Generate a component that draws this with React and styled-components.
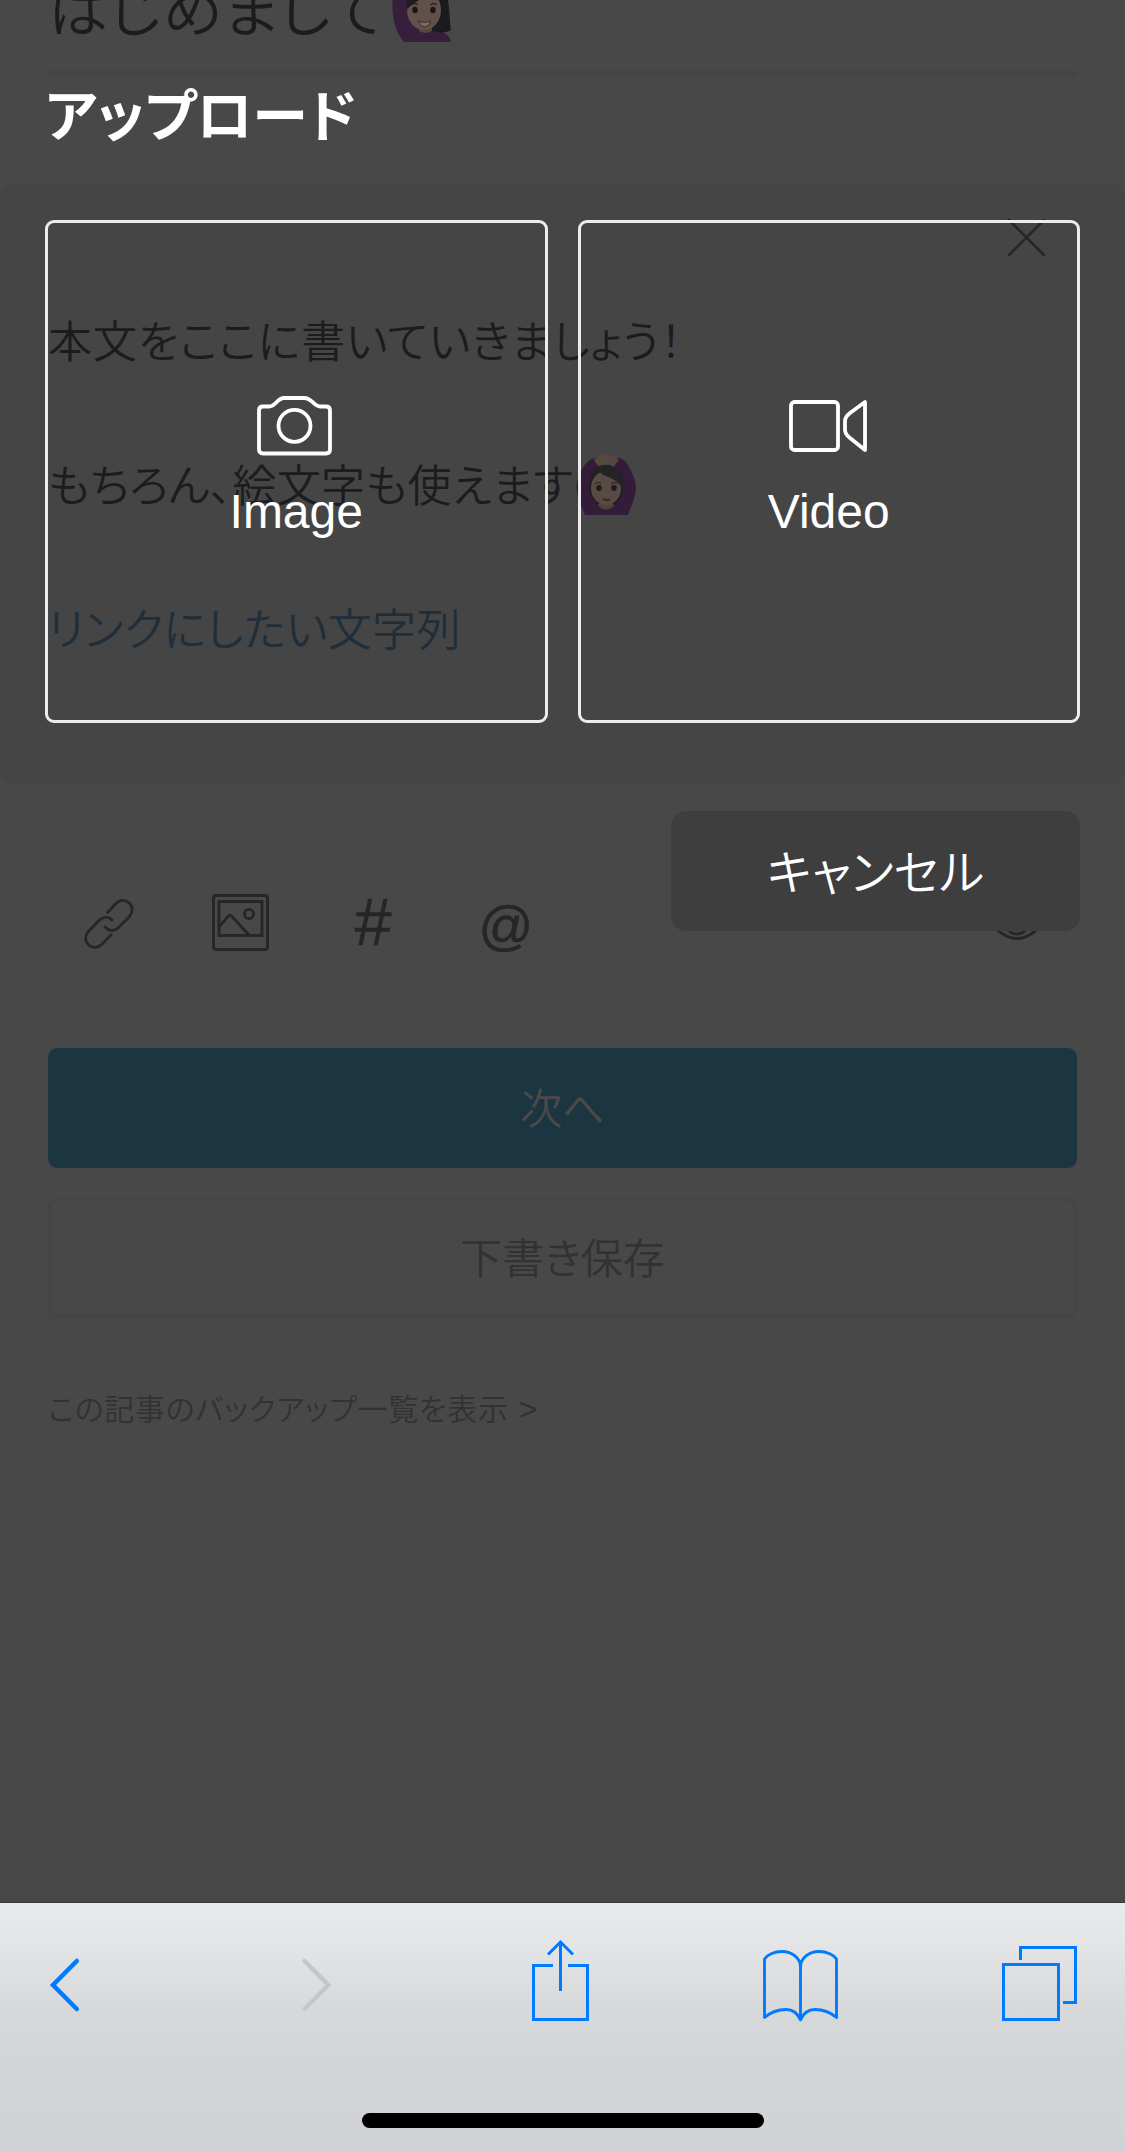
import React from "react";
import styled, { createGlobalStyle } from "styled-components";

const Global = createGlobalStyle`
  *, *::before, *::after { box-sizing: border-box; }
  body {
    margin: 0;
    background: #484848;
    font-family: "Liberation Sans", "Noto Sans CJK JP", sans-serif;
  }
  p, h1, h2 { margin: 0; font-weight: 400; }
  button { font-family: inherit; border: 0; padding: 0; margin: 0; background: none; }
  svg { display: block; flex: none; overflow: visible; }
`;

const Screen = styled.div`
  width: 1125px;
  height: 2152px;
  display: flex;
  flex-direction: column;
  position: relative;
  overflow: hidden;
  background: #484848;
`;

const Page = styled.main`
  flex: 1;
  display: flex;
  flex-direction: column;
`;

const Line = styled.p`
  display: flex;
  align-items: center;
  white-space: nowrap;
  font-family: "Noto Sans CJK JP", sans-serif;
  font-feature-settings: "palt";
  font-weight: 350;
  padding-bottom: 5px;
  font-size: ${(p) => p.$size}px;
  letter-spacing: ${(p) => p.$track || 0}px;
  color: ${(p) => p.$color || "#1c1c1c"};
`;

const TitleRow = styled.header`
  height: 76px;
  margin: 0 48px;
  border-bottom: 6px solid #454545;
  display: flex;
  align-items: flex-end;
  gap: 6px;
  padding: 0 0 28px 0;
`;

const TitleText = styled(Line)`
  height: 68px;
`;

const EditorPanel = styled.section`
  margin-top: 108px;
  height: 600px;
  border-radius: 14px;
  background: #454545;
  padding: 35px 48px 0;
  display: flex;
  flex-direction: column;
`;

const CloseRow = styled.div`
  display: flex;
  justify-content: flex-end;
  height: 49px;
  padding-right: 32px;
`;

const BodyLine = styled(Line)`
  height: 144px;
  padding-bottom: 3px;
  gap: 3px;

  svg { margin-top: 4px; }
`;

const ToolRow = styled.div`
  height: 264px;
  display: flex;
  align-items: center;
  padding: 14px 83px 0 84px;
`;

const Tool = styled.span`
  width: ${(p) => p.$w}px;
  height: 60px;
  margin-right: ${(p) => p.$gap || 0}px;
  padding-bottom: ${(p) => p.$lift || 0}px;
  padding-top: ${(p) => p.$drop || 0}px;
  display: flex;
  align-items: center;
  justify-content: center;
  color: #262626;
  font-size: ${(p) => p.$size || 48}px;
  line-height: 60px;
  -webkit-text-stroke: 0.6px #262626;
`;

const Spacer = styled.span`
  flex: 1;
`;

const Actions = styled.div`
  padding: 0 48px;
  display: flex;
  flex-direction: column;
  gap: 30px;
`;

const ActionButton = styled.button`
  height: 120px;
  border-radius: 9px;
  display: flex;
  align-items: center;
  justify-content: center;
  background: ${(p) => (p.$primary ? "#1b3641" : "transparent")};
  border: ${(p) => (p.$primary ? "0" : "3px solid #454545")};
`;

const Backup = styled(Line)`
  margin: 67px 0 0 48px;
  height: 48px;
`;

const Chevron = styled.span`
  font-family: "Liberation Sans", sans-serif;
  font-size: 32px;
  margin: 5px 0 0 10px;
`;

const BrowserBar = styled.nav`
  height: 250px;
  border-top: 1px solid #39393a;
  background: linear-gradient(#e9eaeb 0, #e4e5e6 38px, #d6d8da 110px, #d3d4d8 160px, #d1d2d6 100%);
  display: flex;
  flex-direction: column;
  align-items: center;
  justify-content: space-between;
  padding: 36px 0 24px;
`;

const BrowserIcons = styled.div`
  width: 100%;
  padding-left: 50px;
  display: flex;
`;

const BrowserButton = styled.span`
  margin-right: ${(p) => p.$gap || 0}px;
`;

const HomeIndicator = styled.div`
  width: 402px;
  height: 15px;
  border-radius: 8px;
  background: #000;
`;

const Sheet = styled.div`
  position: absolute;
  inset: 0 0 250px 0;
  padding: 76px 45px 0;
  display: flex;
  flex-direction: column;
`;

const SheetTitle = styled.h2`
  height: 144px;
  line-height: 72px;
  color: #fff;
  font-family: "Noto Sans CJK JP", sans-serif;
  font-feature-settings: "palt";
  font-weight: 700;
  font-size: 56px;
`;

const Choices = styled.div`
  display: grid;
  grid-template-columns: 1fr 1fr;
  gap: 30px;
`;

const Choice = styled.button`
  height: 503px;
  border: 3px solid #ececec;
  border-radius: 9px;
  display: flex;
  flex-direction: column;
  align-items: center;
  color: #fff;
  padding-top: 173px;
  font-size: 48px;
  line-height: 56px;
`;

const ChoiceIcon = styled.span`
  height: 88px;
  display: flex;
`;

const Cancel = styled.button`
  align-self: flex-end;
  margin-top: 88px;
  width: 409px;
  height: 120px;
  border-radius: 15px;
  background: #3e3e3e;
  display: flex;
  align-items: center;
  justify-content: center;
`;

const RaisingHand = () => (
  <svg width="60" height="60" viewBox="0 0 60 60">
    <defs><clipPath id="handClip"><rect width="60" height="60" /></clipPath></defs>
    <g clipPath="url(#handClip)">
      <path d="M3 0C-2 24 0 46 12 60H59C58 52 50 49 42 49L20 42C16 32 17 14 17 0Z" fill="#361f3d" />
      <path d="M17 8C24 -10 52 -8 56 18C58 32 58 43 59 48C53 52 45 50 41 49L22 43C17 32 14 20 17 8Z" fill="#1b1b1d" />
      <path d="M27 40h13v9q-6 4-13 0z" fill="#584538" />
      <ellipse cx="32" cy="28" rx="17" ry="20" fill="#62514a" />
      <path d="M15 27C22 20 36 15 36 6C42 13 50 15 52 28C55 6 46-2 33-2C21-2 13 8 15 27Z" fill="#1c1c1e" />
      <ellipse cx="23" cy="28" rx="2.7" ry="3.2" fill="#1a1513" />
      <ellipse cx="41" cy="28" rx="2.7" ry="3.2" fill="#1a1513" />
      <path d="M19 23q4-3 7 0M38 23q4-3 7 0" stroke="#2b221e" strokeWidth="1.4" fill="none" />
      <path d="M26 39q7 3 13 0q-2 6-6 6t-7-6z" fill="#75706b" stroke="#4a2925" strokeWidth="1" />
    </g>
  </svg>
);

const OkGesture = () => (
  <svg width="61" height="60" viewBox="0 0 61 60">
    <path d="M9 60C3 45-2 35 2 24C6 12 12 3 20 3L23 12L38 12L42 3C50 3 55 14 59 26C62 37 57 46 52 60Z" fill="#321c3a" />
    <path d="M18 5C24-2 36-2 43 5L38 11L33 4H28L22 11Z" fill="#59473c" />
    <path d="M22 11L28 4H34L39 11Z" fill="#4b4b4b" />
    <path d="M13 31C13 16 20 10 30 10C41 10 47 18 47 31C47 42 42 48 36 51H24C18 48 13 42 13 31Z" fill="#202022" />
    <path d="M24 46h12l2 5q-8 7-16 0z" fill="#51423a" />
    <ellipse cx="30" cy="33" rx="15" ry="17" fill="#584b45" />
    <path d="M14 32C15 21 20 18 22 15C28 24 41 21 46 34C48 19 40 10 30 10C20 10 13 18 14 32Z" fill="#242426" />
    <ellipse cx="23" cy="33" rx="2.8" ry="3" fill="#211b18" />
    <ellipse cx="38" cy="33" rx="2.8" ry="3" fill="#211b18" />
    <path d="M19 29q4-3 6 0M35 29q4-3 6 0" stroke="#2b221e" strokeWidth="1.2" fill="none" />
    <path d="M27 44q4 2 7 0" stroke="#432521" strokeWidth="2" fill="none" />
  </svg>
);

const CloseIcon = () => (
  <svg width="37" height="38" fill="none" stroke="#262626" strokeWidth="2.6" strokeLinecap="round">
    <path d="M1 1L36 36M36 1L1 36" />
  </svg>
);

const LinkIcon = () => (
  <svg width="50" height="50" viewBox="0 0 50 50" fill="none" stroke="currentColor" strokeWidth="2.8" strokeLinecap="round">
    <path d="M23.500 13.500L32 4.500C36 0.300 41.500 0.600 45 3.800C49 7.500 49.300 13 45.500 17.500L34 29C29.500 33 24.500 32 21 28" />
    <path d="M28 21C24.500 17.500 19.500 17.500 15.500 21L4.500 32.500C0.700 37 0.700 42 4.500 45.700C8 49.300 13.500 49.300 17.500 45.500L27 36" />
  </svg>
);

const PhotoIcon = () => (
  <svg width="57" height="57" fill="none" stroke="currentColor" strokeWidth="2.9">
    <rect x="1.500" y="1.500" width="54" height="54" rx="2.500" />
    <rect x="7" y="7.500" width="43" height="34" />
    <path d="M7 33L16 22.500Q18 20 20 22.500L37 41" />
    <circle cx="37" cy="20" r="4.600" />
  </svg>
);

const EyeIcon = () => (
  <svg width="58" height="36" fill="none" stroke="currentColor" strokeWidth="2.8">
    <path d="M2 18Q29-15 56 18Q29 51 2 18Z" />
    <circle cx="29" cy="18" r="12" />
  </svg>
);

const CameraIcon = () => (
  <svg width="76" height="60" viewBox="0 0 76 60" fill="none" stroke="currentColor" strokeWidth="3.8" strokeLinejoin="round">
    <path d="M5 10.500H11C18 10.500 19 2 26 2H46C54 2 56 10.500 62 10.500H68Q72 10.500 72 14.500V53.500Q72 57.500 68 57.500H5Q1 57.500 1 53.500V14.500Q1 10.500 5 10.500Z" />
    <circle cx="36.500" cy="29.800" r="16" />
  </svg>
);

const VideoIcon = () => (
  <svg width="79" height="60" viewBox="0 0 79 60" fill="none" stroke="currentColor" strokeWidth="3.8" strokeLinejoin="round">
    <rect x="2" y="6" width="47" height="48" rx="3.500" />
    <path d="M76 6V54L61 42Q56 38 56 34V25Q56 21 61 17Z" />
  </svg>
);

const BackIcon = () => (
  <svg width="29" height="86" fill="none" stroke="#007aff" strokeWidth="4.500" strokeLinecap="round">
    <path d="M26.800 22L3 46L26.800 70" />
  </svg>
);

const ForwardIcon = () => (
  <svg width="29" height="86" fill="none" stroke="#c5c6c8" strokeWidth="4.500" strokeLinecap="round">
    <path d="M2.500 22L26.300 46L2.500 70" />
  </svg>
);

const ShareIcon = () => (
  <svg width="57" height="86" fill="none" stroke="#007aff" strokeWidth="3">
    <path d="M21 26.500H1.500V80.500H55.500V26.500H36" />
    <path d="M28.500 52V3M16 15.500L28.500 3L41 15.500" />
  </svg>
);

const BookIcon = () => (
  <svg width="75" height="86" fill="none" stroke="#007aff" strokeWidth="2.900" strokeLinejoin="round">
    <path d="M37.500 81V28C37.500 19 29 12.500 19 12.500C11 12.500 4 16 1.500 20V78.500C8 73 15 70.500 23 70.500C30 70.500 35 75 37.500 81C40 75 45 70.500 52 70.500C60 70.500 67 73 73.500 78.500V20C71 16 64 12.500 56 12.500C46 12.500 37.500 19 37.500 28" />
  </svg>
);

const TabsIcon = () => (
  <svg width="75" height="86" fill="none" stroke="#007aff" strokeWidth="3">
    <rect x="1.500" y="25.500" width="55" height="55" />
    <path d="M18.500 21V8.500H73.500V63.500H61" />
  </svg>
);

export default function App() {
  return (
    <Screen>
      <Global />
      <Page>
        <TitleRow>
          <TitleText as="h1" $size={60} $track={1}>はじめまして</TitleText>
          <RaisingHand />
        </TitleRow>
        <EditorPanel>
          <CloseRow><CloseIcon /></CloseRow>
          <BodyLine $size={44} $track={1}>本文をここに書いていきましょう！</BodyLine>
          <BodyLine $size={44} $track={0.4}>もちろん、絵文字も使えます<OkGesture /></BodyLine>
          <BodyLine $size={44} $track={0.3} $color="#202e3b">リンクにしたい文字列</BodyLine>
        </EditorPanel>
        <ToolRow>
          <Tool $w={50} $gap={78} $drop={1}><LinkIcon /></Tool>
          <Tool $w={57} $gap={84} $lift={2}><PhotoIcon /></Tool>
          <Tool $w={40} $gap={87} $size={66} $lift={2}>#</Tool>
          <Tool $w={52} $size={54} $drop={3}>@</Tool>
          <Spacer />
          <Tool $w={50} $lift={2}><EyeIcon /></Tool>
        </ToolRow>
        <Actions>
          <ActionButton $primary><Line as="span" $size={42} $color="#4b4949">次へ</Line></ActionButton>
          <ActionButton><Line as="span" $size={42} $color="#323232">下書き保存</Line></ActionButton>
        </Actions>
        <Backup $size={30} $track={0.7} $color="#323232">この記事のバックアップ一覧を表示<Chevron>&gt;</Chevron></Backup>
      </Page>
      <BrowserBar>
        <BrowserIcons>
          <BrowserButton $gap={223}><BackIcon /></BrowserButton>
          <BrowserButton $gap={201}><ForwardIcon /></BrowserButton>
          <BrowserButton $gap={174}><ShareIcon /></BrowserButton>
          <BrowserButton $gap={164}><BookIcon /></BrowserButton>
          <BrowserButton><TabsIcon /></BrowserButton>
        </BrowserIcons>
        <HomeIndicator />
      </BrowserBar>
      <Sheet>
        <SheetTitle>アップロード</SheetTitle>
        <Choices>
          <Choice><ChoiceIcon><CameraIcon /></ChoiceIcon>Image</Choice>
          <Choice><ChoiceIcon><VideoIcon /></ChoiceIcon>Video</Choice>
        </Choices>
        <Cancel><Line as="span" $size={48} $color="#fff">キャンセル</Line></Cancel>
      </Sheet>
    </Screen>
  );
}
